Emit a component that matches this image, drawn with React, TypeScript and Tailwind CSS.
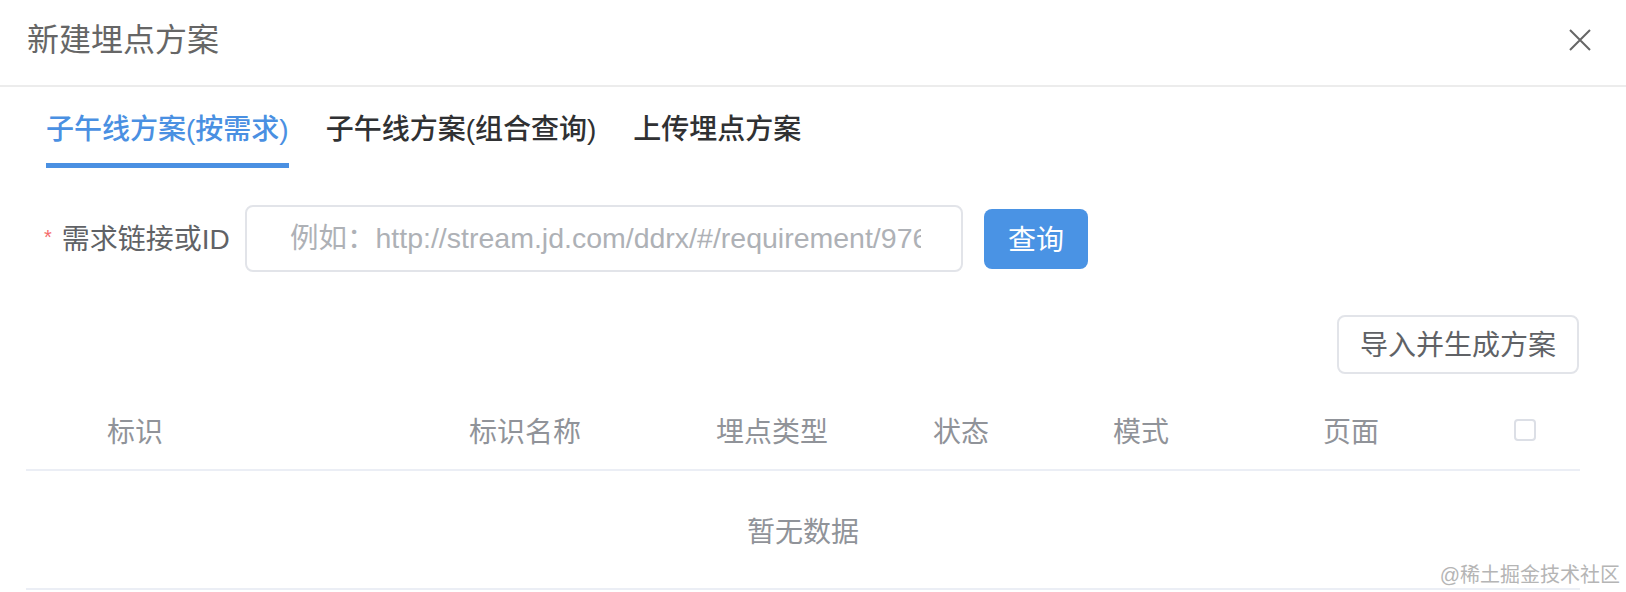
import React from "react";

const FONT = { fontFamily: '"Liberation Sans", "Noto Sans CJK SC", sans-serif' };

export default function App() {
  const cols = [
    { label: "标识", w: "w-[443px]", pl: "pl-[81px]" },
    { label: "标识名称", w: "w-[247px]", pl: "" },
    { label: "埋点类型", w: "w-[217px]", pl: "" },
    { label: "状态", w: "w-[180px]", pl: "" },
    { label: "模式", w: "w-[210px]", pl: "" },
    { label: "页面", w: "w-[191px]", pl: "" },
  ];
  return (
    <div className="relative w-[1626px] h-[592px] overflow-hidden bg-white" style={FONT}>
      {/* header */}
      <div className="flex h-[87px] items-center justify-between border-b-2 border-[#ececec] pl-[27px] pr-[35px]">
        <div className="text-[32px] leading-none text-[#666666] pb-[6px]">新建埋点方案</div>
        <svg width="22" height="22" viewBox="0 0 22 22" className="mb-[6px]">
          <path d="M1 1 L21 21 M21 1 L1 21" stroke="#666666" strokeWidth="2" fill="none" />
        </svg>
      </div>

      {/* tabs */}
      <div className="flex pl-[46px] gap-[37px]">
        {[
          { t: "子午线方案(按需求)", active: true },
          { t: "子午线方案(组合查询)", active: false },
          { t: "上传埋点方案", active: false },
        ].map((tab) => (
          <div key={tab.t} className="flex flex-col pt-[23px]">
            <div
              className={
                "text-[28px] leading-[40px] font-medium " +
                (tab.active ? "text-[#4a90e2]" : "text-[#303133]")
              }
            >
              {tab.t}
            </div>
            <div className={"mt-[13px] h-[5px] " + (tab.active ? "bg-[#4a90e2]" : "bg-transparent")} />
          </div>
        ))}
      </div>

      {/* form row */}
      <div className="flex items-center mt-[37px] pl-[44px]">
        <div className="flex items-center w-[201px] text-[28px] leading-[40px] text-[#606266] pt-[2px]">
          <span className="text-[#f56c6c] text-[20px] mr-[10px] -mt-[6px]">*</span>
          <span>需求链接或ID</span>
        </div>
        <input
          className="w-[718px] h-[67px] rounded-[8px] border-2 border-[#e2e4e9] bg-white pl-[43px] pr-[40px] text-[28.5px] text-[#606266] outline-none placeholder:text-[#aeb1b6]"
          style={FONT}
          placeholder="例如：http://stream.jd.com/ddrx/#/requirement/976543"
        />
        <button className="ml-[21px] w-[104px] h-[60px] rounded-[8px] bg-[#4a93e4] pt-[5px] text-white text-[28px] leading-none">
          查询
        </button>
      </div>

      {/* import button */}
      <div className="flex justify-end mt-[43px] pr-[47px]">
        <button className="w-[242px] h-[59px] rounded-[8px] border-2 border-[#e2e4e9] bg-white pt-[3px] text-[28px] leading-none text-[#606266]">
          导入并生成方案
        </button>
      </div>

      {/* table */}
      <div className="mx-[26px] mt-[16px] w-[1554px]">
        <div className="flex h-[81px] items-center border-b-2 border-[#ebeef5]">
          {cols.map((c) => (
            <div key={c.label} className={c.w + " " + c.pl + " pt-[7px] text-[28px] leading-[40px] text-[#909399]"}>
              {c.label}
            </div>
          ))}
          <div className="w-[66px] flex">
            <div className="w-[22px] h-[22px] rounded-[4px] border-2 border-[#dcdfe6] bg-white" />
          </div>
        </div>
        <div className="flex h-[119px] items-center justify-center border-b-2 border-[#ebeef5] pt-[6px] text-[28px] text-[#909399]">
          暂无数据
        </div>
      </div>

      {/* watermark */}
      <div className="absolute right-[6px] bottom-[7px] text-[20px] leading-none text-[#b5b5b5]">
        @稀土掘金技术社区
      </div>
    </div>
  );
}
